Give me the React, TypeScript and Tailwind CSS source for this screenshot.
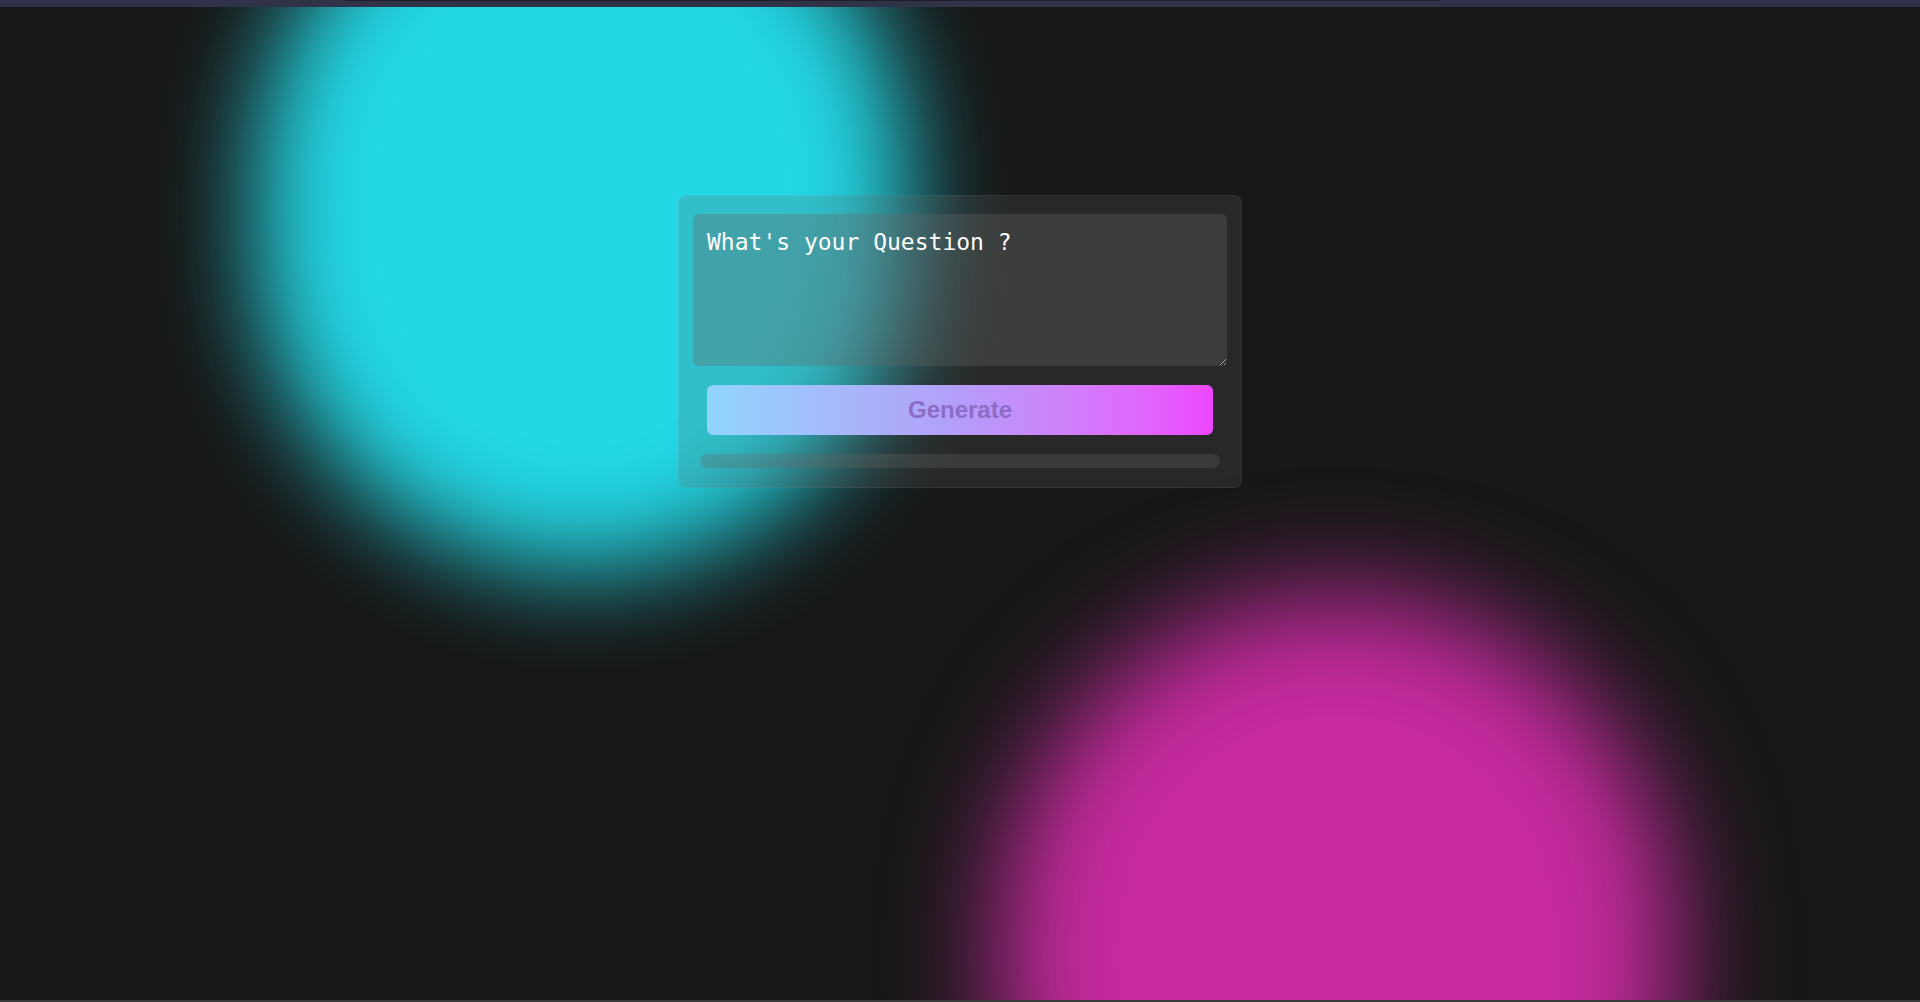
import React from "react";

const App = () => {
  return (
    <div className="relative flex h-[1002px] w-full flex-col overflow-hidden bg-[#171717]">
      {/* background blobs */}
      <div className="pointer-events-none absolute left-[257px] top-[-150px] h-[720px] w-[650px] rounded-full bg-[#23d7e5] blur-[50px]" />
      <div className="pointer-events-none absolute left-[1000px] top-[595px] h-[720px] w-[675px] rounded-full bg-[#c72a9f] blur-[55px]" />

      {/* top strip */}
      <div className="relative z-10 flex h-[7px] w-full bg-[#303247]">
        <div className="ml-[345px] h-[1px] w-[1095px] bg-[#1d1e29]" />
      </div>

      <main className="relative z-10 flex flex-1 justify-center pt-[188px]">
        <div className="flex h-[293px] w-[564px] flex-col gap-[19px] rounded-lg border border-white/5 bg-[rgba(103,103,103,0.21)] px-[14px] py-[18px]">
          <textarea
            className="h-[152px] w-full rounded-md bg-[rgba(103,103,103,0.33)] px-[14px] pb-[14px] pt-[11px] text-[23px] leading-[1.5] text-white outline-none placeholder:text-white"
            style={{ fontFamily: '"DejaVu Sans Mono", "Liberation Mono", monospace' }}
            placeholder="What's your Question ?"
          />
          <button
            className="mx-[14px] h-[50px] rounded-md bg-gradient-to-r from-[#8fd5fb] via-[#b49df9] to-[#ed45fe] text-[24px] font-bold text-[#8b6dc5]"
            style={{ fontFamily: '"Liberation Sans", Arial, sans-serif' }}
          >
            Generate
          </button>
          <div className="mx-[7px] h-[14px] rounded-full bg-[rgba(103,103,103,0.3)]" />
        </div>
      </main>

      <div className="relative z-10 h-[2px] w-full bg-[#3a3a3a]" />
    </div>
  );
};

export default App;
